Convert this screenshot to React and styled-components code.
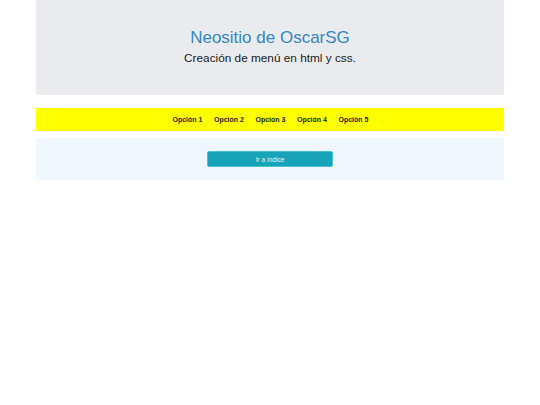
import React from "react";
import styled, { createGlobalStyle } from "styled-components";

const Global = createGlobalStyle`
  html, body { margin: 0; padding: 0; background: #ffffff; }
  body { font-family: "Liberation Sans", Arial, sans-serif; }
`;

const Page = styled.div`
  width: 468px;
  margin: 0 auto;
  display: flex;
  flex-direction: column;
`;

const Header = styled.header`
  height: 95px;
  background: #e9ebef;
  border-radius: 0 0 2px 2px;
  display: flex;
  flex-direction: column;
  align-items: center;
  padding-top: 28px;
  box-sizing: border-box;
`;

const Title = styled.h1`
  margin: 0;
  font-size: 17px;
  font-weight: normal;
  color: #3586bf;
  line-height: 19px;
`;

const Subtitle = styled.p`
  margin: 4px 0 0;
  font-size: 11.8px;
  color: #222;
  line-height: 14px;
`;

const Nav = styled.nav`
  margin-top: 13px;
  height: 23px;
  background: #ffff00;
  display: flex;
  justify-content: center;
  align-items: center;
  gap: 12.5px;
`;

const NavItem = styled.a`
  font-size: 7px;
  font-weight: bold;
  color: #222;
  text-decoration: none;
  width: 29px;
  white-space: nowrap;
`;

const Section = styled.section`
  margin-top: 7px;
  height: 42px;
  background: #f0f7fe;
  display: flex;
  justify-content: center;
  padding-top: 13px;
  box-sizing: border-box;
`;

const Button = styled.button`
  width: 126px;
  height: 16px;
  background: #17a3b8;
  border: 1px solid #4cc2d3;
  border-radius: 2px;
  color: #e6f6f8;
  font-family: "Liberation Sans", Arial, sans-serif;
  font-size: 6.5px;
  padding: 0;
`;

export default function App() {
  return (
    <>
      <Global />
      <Page>
        <Header>
          <Title>Neositio de OscarSG</Title>
          <Subtitle>Creación de menú en html y css.</Subtitle>
        </Header>
        <Nav>
          {[1, 2, 3, 4, 5].map((n) => (
            <NavItem key={n} href="#">Opción {n}</NavItem>
          ))}
        </Nav>
        <Section>
          <Button>Ir a índice</Button>
        </Section>
      </Page>
    </>
  );
}
